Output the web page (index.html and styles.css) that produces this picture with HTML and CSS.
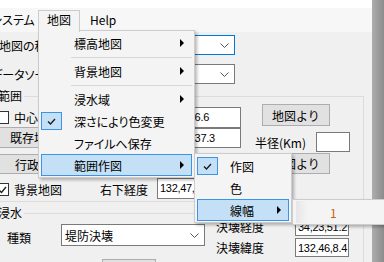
FILE: index.html
```html
<!DOCTYPE html>
<html lang="ja">
<head>
    <meta charset="UTF-8">
    <meta name="viewport" content="width=device-width, initial-scale=1.0">
    <title>地図</title>
    <link rel="stylesheet" href="styles.css">
</head>
<body>
<div class="screen">
    <div class="window">
        <div class="title-strip"></div>
        <nav class="menubar">
            <span class="menubar-item first">システム</span>
            <span class="menubar-item open">地図</span>
            <span class="menubar-item help">Help</span>
        </nav>

        <main class="client">
            <div class="field-row">
                <span class="field-label">地図の種類</span>
                <div class="combo focused">
                    <span></span>
                    <svg class="chevron" width="9" height="5" viewBox="0 0 9 5"><polyline points="0.5,0.5 4.5,4.5 8.5,0.5" fill="none" stroke="#555"/></svg>
                </div>
            </div>
            <div class="field-row">
                <span class="field-label wide">データソース</span>
                <div class="combo">
                    <span></span>
                    <svg class="chevron" width="9" height="5" viewBox="0 0 9 5"><polyline points="0.5,0.5 4.5,4.5 8.5,0.5" fill="none" stroke="#555"/></svg>
                </div>
            </div>

            <fieldset class="group range">
                <legend>範囲</legend>
                <div class="range-row">
                    <label class="check-cell lead"><span class="cb"></span>中心</label>
                    <div class="textbox tb-coord first-tb">34,23,26.6</div>
                    <button class="btn btn-map">地図より</button>
                </div>
                <div class="range-row">
                    <div class="btn-cell lead"><button class="btn btn-area">既存地域</button></div>
                    <div class="textbox tb-coord">132,27,37.3</div>
                    <span class="radius-label">半径(Km)</span>
                    <div class="textbox tb-small"></div>
                </div>
                <div class="range-row">
                    <div class="btn-cell lead"><button class="btn btn-admin">行政区域</button></div>
                    <button class="btn btn-map second">地図より</button>
                </div>
                <div class="range-row">
                    <label class="check-cell short"><span class="cb">
                        <svg width="9" height="8" viewBox="0 0 9 8"><polyline points="1,4 3.5,6.5 8,1" fill="none" stroke="#222" stroke-width="1.4"/></svg>
                    </span>背景地図</label>
                    <span class="lon-label">右下経度</span>
                    <div class="textbox tb-coord last-tb">132,47,12.5</div>
                </div>
            </fieldset>

            <fieldset class="group flood">
                <legend>浸水</legend>
                <div class="flood-grid">
                    <span class="kind-label">種類</span>
                    <div class="combo kind">
                        <span>堤防決壊</span>
                        <svg class="chevron" width="9" height="5" viewBox="0 0 9 5"><polyline points="0.5,0.5 4.5,4.5 8.5,0.5" fill="none" stroke="#555"/></svg>
                    </div>
                    <span class="break-label">決壊経度</span>
                    <div class="textbox tb-break">34,23,51.2</div>
                    <span class="break-label">決壊緯度</span>
                    <div class="textbox tb-break">132,46,8.4</div>
                    <button class="btn btn-bottom">実行</button>
                </div>
            </fieldset>
        </main>
    </div>
    <div class="edge"></div>

    <div class="menu menu-map">
        <div class="menu-row"><span>標高地図</span><span class="menu-arrow"></span></div>
        <div class="menu-sep"></div>
        <div class="menu-row"><span>背景地図</span><span class="menu-arrow"></span></div>
        <div class="menu-sep"></div>
        <div class="menu-row"><span>浸水域</span><span class="menu-arrow"></span></div>
        <div class="menu-row">
            <span class="menu-check"><svg width="9" height="7" viewBox="0 0 9 7"><polyline points="1,3.5 3.5,6 8,1" fill="none" stroke="#1a1a1a" stroke-width="1.3"/></svg></span>
            <span>深さにより色変更</span>
        </div>
        <div class="menu-row"><span>ファイルへ保存</span></div>
        <div class="menu-row active"><span>範囲作図</span><span class="menu-arrow"></span></div>
    </div>

    <div class="menu menu-range">
        <div class="menu-row">
            <span class="menu-check"><svg width="9" height="7" viewBox="0 0 9 7"><polyline points="1,3.5 3.5,6 8,1" fill="none" stroke="#1a1a1a" stroke-width="1.3"/></svg></span>
            <span>作図</span>
        </div>
        <div class="menu-row"><span>色</span></div>
        <div class="menu-row active"><span>線幅</span><span class="menu-arrow"></span></div>
    </div>

    <div class="menu menu-width">
        <div class="menu-row fading"><span class="width-value">1</span></div>
    </div>
</div>
</body>
</html>
```

FILE: styles.css
```css
* {
    box-sizing: border-box;
    margin: 0;
    padding: 0;
}
body {
    width: 384px;
    height: 262px;
    overflow: hidden;
    font-family: "Noto Sans CJK JP", "Noto Sans", sans-serif;
    font-size: 12px;
    font-feature-settings: "palt";
    color: #000;
    background-color: #f0f0f0;
}
.screen {
    position: relative;
    display: flex;
    width: 384px;
    height: 262px;
    overflow: hidden;
}
.window {
    flex: none;
    width: 372px;
    background-color: #f0f0f0;
}
.title-strip {
    height: 8px;
    background-color: #fff;
}
.menubar {
    display: flex;
    align-items: flex-end;
    height: 24px;
    background-color: #f7f7f7;
}
.menubar-item {
    height: 22px;
    line-height: 18px;
    padding: 0 8px;
    border: 1px solid transparent;
    border-bottom: 0;
    white-space: nowrap;
}
.menubar-item.first {
    width: 56px;
    margin-left: -18px;
    text-align: right;
    overflow: hidden;
}
.menubar-item.open {
    position: relative;
    z-index: 3;
    background-color: #f4f4f4;
    border-color: #cccccc;
}
.menubar-item.help {
    padding-left: 9px;
}

.client {
    padding-top: 3px;
}
.field-row {
    display: flex;
    align-items: center;
    height: 20px;
}
.field-row + .field-row {
    margin-top: 9px;
}
.field-label {
    width: 101px;
    margin-left: -1px;
    white-space: nowrap;
}
.field-label.wide {
    width: 109px;
    margin-left: -9px;
}
.combo {
    display: flex;
    align-items: center;
    justify-content: space-between;
    width: 135px;
    height: 20px;
    padding: 0 5px 0 3px;
    background-color: #fff;
    border: 1px solid #7a7a7a;
    white-space: nowrap;
}
.combo.focused {
    border-color: #0078d7;
}
.chevron {
    flex: none;
}

.group {
    min-width: 0;
    margin: 0 8px 0 -10px;
    border: 1px solid #dcdcdc;
}
.group legend {
    margin-left: 5px;
    padding: 0 2px;
    line-height: 14px;
}
.range {
    margin-top: 5px;
    padding: 1px 0;
}
.range-row {
    display: flex;
    align-items: flex-start;
    height: 24px;
}
.lead {
    flex: none;
    width: 166px;
}
.check-cell {
    display: flex;
    align-items: center;
    gap: 5px;
    height: 13px;
    margin-top: 7px;
    padding-left: 5px;
    white-space: nowrap;
}
.check-cell.short {
    flex: none;
    width: 109px;
}
.cb {
    display: flex;
    align-items: center;
    justify-content: center;
    flex: none;
    width: 13px;
    height: 13px;
    background-color: #fff;
    border: 1px solid #333;
}
.textbox {
    flex: none;
    height: 20px;
    padding-left: 2px;
    background-color: #fff;
    border: 1px solid #7a7a7a;
    font-family: "Liberation Sans", Arial, sans-serif;
    font-size: 11px;
    letter-spacing: -0.3px;
    line-height: 18px;
    white-space: nowrap;
    overflow: hidden;
}
.tb-coord {
    width: 84px;
}
.tb-coord.first-tb {
    height: 21px;
    margin-top: 3px;
}
.tb-coord.last-tb {
    height: 21px;
    margin-top: 2px;
}
.tb-small {
    width: 34px;
    margin-top: 4px;
}
.btn {
    flex: none;
    height: 22px;
    font-family: inherit;
    font-size: 12px;
    color: #000;
    background-color: #e1e1e1;
    border: 1px solid #adadad;
}
.btn-map {
    width: 68px;
    margin-left: 21px;
}
.btn-map.second {
    height: 21px;
    margin-top: 1px;
    margin-left: 105px;
}
.btn-area {
    width: 70px;
    height: 21px;
    margin: -1px 0 0 8px;
}
.btn-admin {
    width: 80px;
    height: 20px;
    margin: 2px 0 0 8px;
}
.radius-label {
    flex: none;
    width: 61px;
    margin: 8px 0 0 14px;
    line-height: 14px;
}
.lon-label {
    flex: none;
    width: 57px;
    margin-top: 7px;
    line-height: 14px;
}

.flood {
    margin-top: 4px;
    padding-bottom: 4px;
}
.flood-grid {
    display: grid;
    grid-template-columns: 70px 144px 90px 54px;
    grid-template-rows: 21px 21px auto;
    margin-top: -4px;
}
.kind-label {
    grid-row: 1 / 3;
    align-self: center;
    padding-left: 16px;
}
.combo.kind {
    grid-column: 2;
    grid-row: 1 / 3;
    align-self: start;
    width: 144px;
    height: 22px;
    margin-top: 8px;
}
.break-label {
    grid-column: 3;
    align-self: center;
    padding-left: 11px;
}
.tb-break {
    grid-column: 4;
    width: 54px;
    height: 19px;
    align-self: center;
}
.btn-bottom {
    grid-column: 2;
    grid-row: 3;
    width: 54px;
    margin: 1px 0 0 41px;
}

.edge {
    flex: none;
    width: 12px;
    background: linear-gradient(to right, #adadad, #8c8c8c);
}

.menu {
    position: absolute;
    z-index: 2;
    padding: 1px 2px;
    background-color: #f4f4f4;
    border: 1px solid #cccccc;
    box-shadow: 2px 2px 3px rgba(0,0,0,0.28);
}
.menu-map {
    left: 38px;
    top: 30px;
    width: 157px;
}
.menu-range {
    left: 194px;
    top: 153px;
    z-index: 4;
    width: 98px;
}
.menu-width {
    left: 292px;
    top: 199px;
    z-index: 5;
    width: 110px;
}
.menu-row {
    position: relative;
    display: flex;
    align-items: center;
    height: 22px;
    padding-left: 32px;
    border: 1px solid transparent;
    white-space: nowrap;
}
.menu-row.active {
    background-color: #c4e0f7;
    border-color: #3d93e6;
}
.menu-row.fading {
    padding-left: 34px;
    background: linear-gradient(to right, #e6e6e6, #f4f4f4 12px);
}
.menu-arrow {
    margin-left: auto;
    margin-right: 7px;
    width: 0;
    height: 0;
    border-left: 4px solid #000;
    border-top: 4px solid transparent;
    border-bottom: 4px solid transparent;
}
.menu-check {
    position: absolute;
    left: -1px;
    top: 1px;
    display: flex;
    align-items: center;
    justify-content: center;
    width: 21px;
    height: 18px;
    background-color: #c4e0f7;
    border: 1px solid #3d93e6;
}
.menu-sep {
    height: 1px;
    margin: 3px 0 2px 30px;
    background-color: #d7d7d7;
}
.width-value {
    color: #c8650c;
}
```
